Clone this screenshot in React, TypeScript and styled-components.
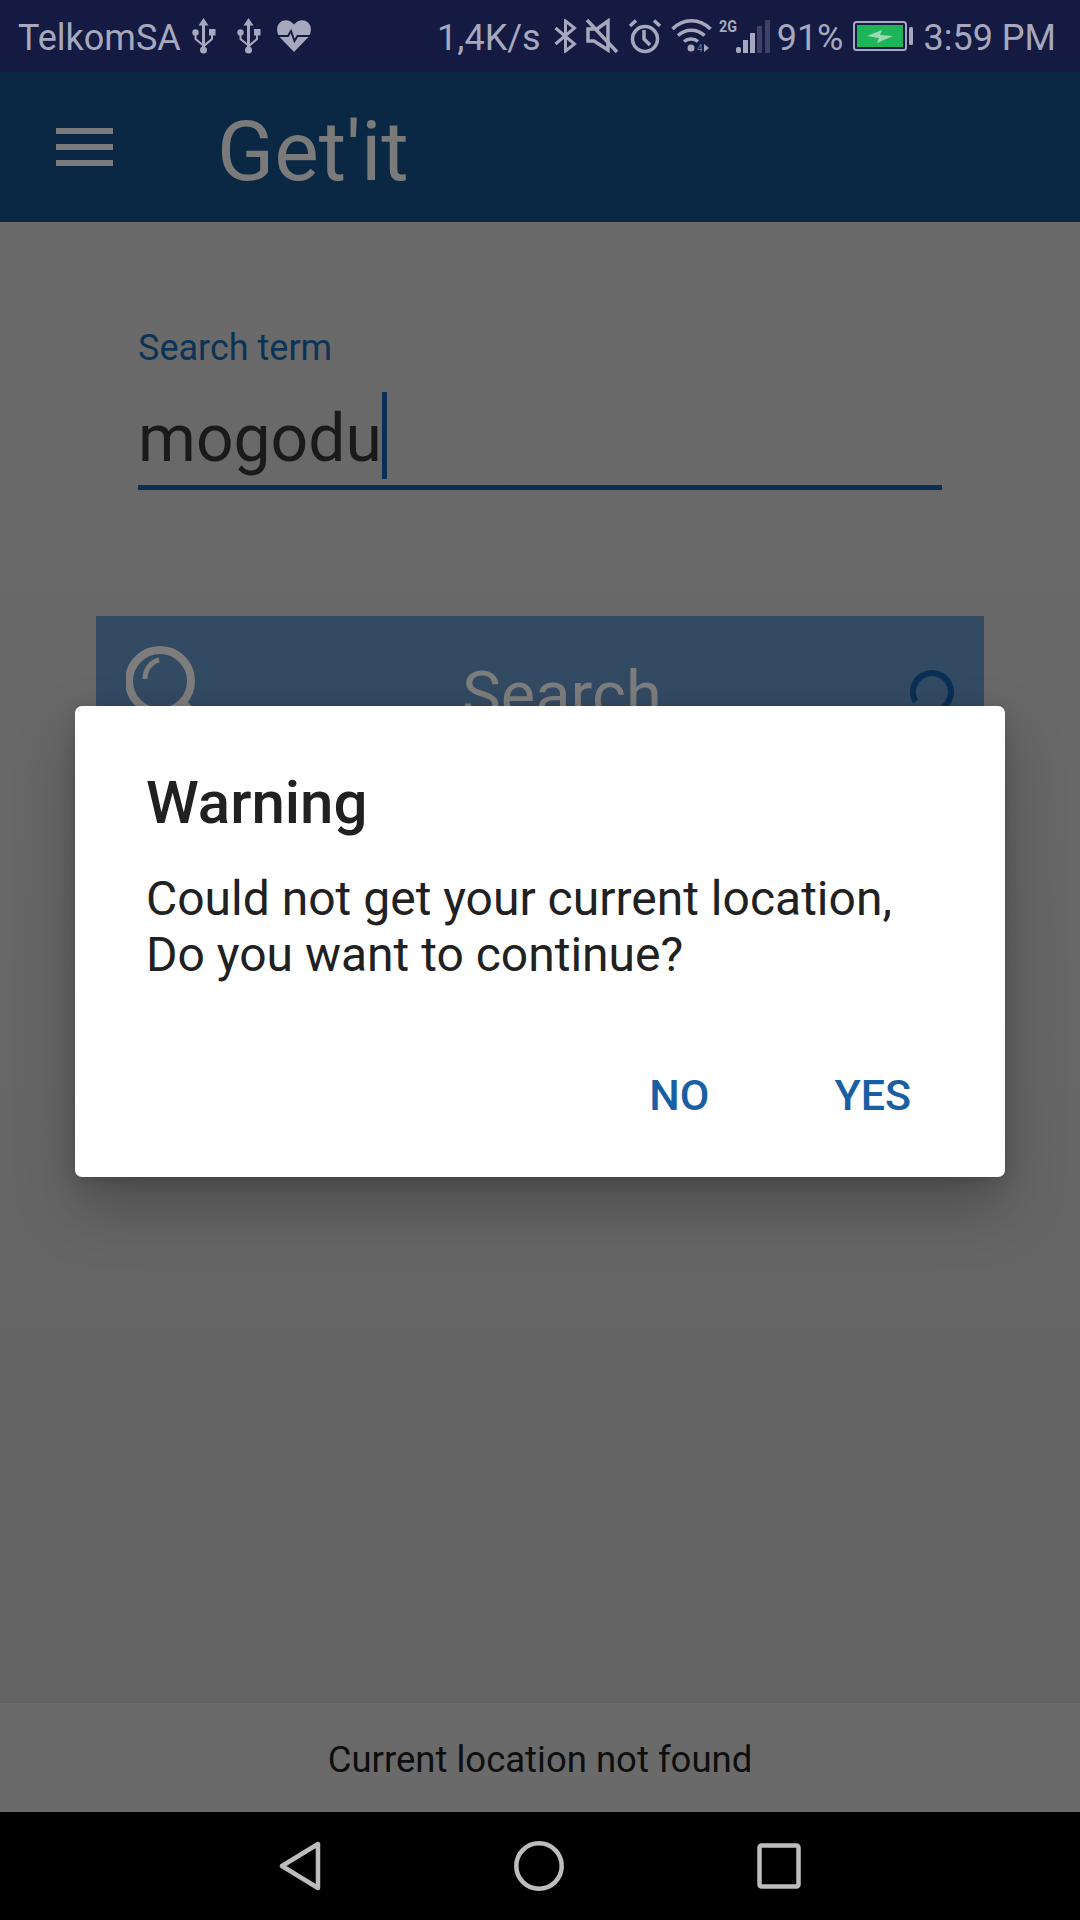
import styled, { createGlobalStyle } from "styled-components";

const GlobalStyle = createGlobalStyle`
  html, body {
    margin: 0;
    padding: 0;
    background: #666;
  }
  * {
    box-sizing: border-box;
  }
`;

const Screen = styled.div`
  position: relative;
  width: 1080px;
  height: 1920px;
  display: flex;
  flex-direction: column;
  overflow: hidden;
  font-family: Roboto, "Liberation Sans", sans-serif;
`;

const StatusBar = styled.div`
  height: 72px;
  flex: none;
  padding: 0 24px 0 18px;
  display: flex;
  align-items: center;
  justify-content: space-between;
  background: #151a43;
  color: #a6a9bd;
  font-size: 36px;
`;

const StatusGroup = styled.div`
  display: flex;
  align-items: center;
`;

const StatusIcon = styled.svg<{ $left?: number }>`
  flex: none;
  margin-left: ${(p) => p.$left ?? 0}px;
`;

const StatusText = styled.span<{ $left?: number }>`
  margin-left: ${(p) => p.$left ?? 0}px;
  padding-top: 3px;
  white-space: nowrap;
`;

const AppBar = styled.div`
  height: 150px;
  flex: none;
  padding-left: 56px;
  display: flex;
  align-items: center;
  background: #0a2744;
`;

const MenuIcon = styled.div`
  width: 57px;
  height: 38px;
  border-top: 6px solid #7a7a7a;
  border-bottom: 6px solid #7a7a7a;
  display: flex;
  align-items: center;
  &::before {
    content: "";
    width: 100%;
    height: 6px;
    background: #7a7a7a;
  }
`;

const AppTitle = styled.div`
  margin: 10px 0 0 104px;
  color: #7a7a7a;
  font-size: 84px;
  line-height: 1;
`;

const Content = styled.div`
  flex: 1;
  padding: 104px 96px 0;
  background: linear-gradient(#6a6a6a, #646464);
`;

const Form = styled.div`
  padding: 0 42px;
`;

const FieldLabel = styled.div`
  color: #0c3355;
  font-size: 36px;
  line-height: 44px;
`;

const FieldInput = styled.div`
  height: 114px;
  margin-top: 6px;
  padding-top: 27px;
  display: flex;
  align-items: flex-start;
  border-bottom: 5px solid #0a2f54;
  color: #1a1a1a;
  font-size: 66px;
  line-height: 72px;
`;

const Caret = styled.span`
  width: 5px;
  height: 87px;
  margin-top: -11px;
  background: #0a2f54;
`;

const SearchButton = styled.div`
  height: 150px;
  margin-top: 126px;
  padding: 27px 30px 0;
  display: flex;
  align-items: flex-start;
  justify-content: space-between;
  background: #334a63;
`;

const SearchLabel = styled.div`
  margin: 15px 0 0 16px;
  color: #7d7d7d;
  font-size: 65px;
  line-height: 75px;
`;

const SpinnerIcon = styled.svg`
  margin-top: 27px;
`;

const Snackbar = styled.div`
  height: 110px;
  flex: none;
  padding-top: 3px;
  display: flex;
  align-items: center;
  justify-content: center;
  background: #6a6a6a;
  border-top: 1px solid #626262;
  color: #0e0e0e;
  font-size: 36.5px;
`;

const NavBar = styled.div`
  height: 108px;
  flex: none;
  display: flex;
  align-items: center;
  justify-content: center;
  gap: 193px;
  background: #000;
`;

const Dialog = styled.div`
  position: absolute;
  left: 75px;
  top: 706px;
  width: 930px;
  height: 471px;
  padding: 62px 73px 0 71px;
  background: #fff;
  border-radius: 7px;
  box-shadow: 0 30px 60px rgba(0, 0, 0, 0.25), 0 4px 16px rgba(0, 0, 0, 0.15);
`;

const DialogTitle = styled.div`
  color: #212121;
  font-size: 60px;
  font-weight: 500;
  line-height: 70px;
`;

const DialogBody = styled.div`
  margin-top: 33px;
  color: #212121;
  font-size: 48px;
  line-height: 56px;
`;

const DialogActions = styled.div`
  margin-top: 88px;
  padding-right: 21px;
  display: flex;
  justify-content: flex-end;
  gap: 125px;
`;

const DialogAction = styled.div`
  color: #1a5fa3;
  font-size: 43px;
  font-weight: 500;
  line-height: 48px;
`;

const ICON = "#a6a9bd";

const UsbIcon = ({ left }: { left?: number }) => (
  <StatusIcon $left={left} width="24" height="36" viewBox="0 0 24 36" fill={ICON}>
    <path d="M11.500 0l5 7.500h-3.500V30h-3V7.500H6.500z" />
    <circle cx="11.500" cy="32" r="3.500" />
    <circle cx="3.500" cy="14.500" r="3.200" />
    <rect x="17" y="11" width="6.500" height="6.500" />
    <path d="M2.500 16h2v4.500l6 5v2.500l-8-6.500zM19 16h2v5.500l-8 7v-3l6-5z" />
  </StatusIcon>
);

const HealthIcon = () => (
  <StatusIcon $left={16} width="34" height="32" viewBox="0 0 34 32">
    <path
      fill={ICON}
      d="M17 32L2.500 17C-1 12-.5 5.500 3 2.500 7-1 13-.5 17 4.500 21-.5 27-1 31 2.500 34.500 5.500 35 12 31.500 17z"
    />
    <path fill="none" stroke="#151a43" strokeWidth="2" d="M0 16h11l3-5 3.500 10 3-5h14" />
  </StatusIcon>
);

const BluetoothIcon = () => (
  <StatusIcon $left={13} width="23" height="34" viewBox="0 0 23 34" fill="none" stroke={ICON} strokeWidth="3">
    <path d="M1.500 9l19 16-9 7V2l9 7-19 16" />
  </StatusIcon>
);

const MuteIcon = () => (
  <StatusIcon $left={8} width="34" height="36" viewBox="0 0 34 36" fill="none" stroke={ICON} strokeWidth="3.500">
    <path d="M3 13v10h6l14 9V3L12 11H3z" />
    <path d="M2 2l30 32" />
  </StatusIcon>
);

const AlarmIcon = () => (
  <StatusIcon $left={9} width="34" height="36" viewBox="0 0 34 36" fill="none" stroke={ICON} strokeWidth="3.500">
    <circle cx="17" cy="21" r="12.500" />
    <path d="M16 12v9l6 6M2 8l6-5.500M32 8l-6-5.500" />
  </StatusIcon>
);

const WifiIcon = () => (
  <StatusIcon $left={9} width="41" height="34" viewBox="0 0 41 34" fill="none" stroke={ICON} strokeWidth="3.500">
    <path d="M1.500 10c11-11 27-11 38 0M7 16.500c7.500-7 19-7 26.500 0M13 22.500c4-3.500 10-3.500 14 0" />
    <circle cx="20" cy="29" r="3.500" fill={ICON} stroke="none" />
    <text x="26" y="33" fill="#6d7190" stroke="none" fontFamily="Roboto" fontSize="10">4</text>
    <path d="M33 25v8l5-4z" fill={ICON} stroke="none" />
  </StatusIcon>
);

const SignalIcon = () => (
  <StatusIcon $left={7} width="52" height="44" viewBox="0 -4 52 44">
    <text x="0" y="14" fill={ICON} fontFamily="Roboto" fontSize="17" fontWeight="700" textLength="18" lengthAdjust="spacingAndGlyphs">2G</text>
    <rect x="17" y="29" width="5" height="6" rx="2" fill={ICON} />
    <rect x="24" y="22" width="5" height="13" fill={ICON} />
    <rect x="31" y="15" width="5" height="20" fill={ICON} />
    <rect x="38" y="8" width="5" height="27" fill="#3d4266" />
    <rect x="46" y="2" width="5" height="33" fill="#3d4266" />
  </StatusIcon>
);

const BatteryIcon = () => (
  <StatusIcon $left={9} width="60" height="30" viewBox="0 0 60 30">
    <rect x="1" y="1" width="52" height="28" rx="2.500" fill="none" stroke={ICON} strokeWidth="2" />
    <rect x="4" y="4" width="46" height="22" fill="#1eb45a" />
    <path d="M14 15l15-6-2 5 13 1-16 7 2-5z" fill="#9ed9b2" />
    <rect x="56" y="6" width="4" height="18" rx="1.500" fill={ICON} />
  </StatusIcon>
);

const SearchIcon = () => (
  <svg width="72" height="90" viewBox="0 0 72 90" fill="none" stroke="#7d7d7d">
    <circle cx="34" cy="38" r="31" strokeWidth="8" />
    <path d="M19 36c0-10 6-17 14-19" strokeWidth="5" />
    <path d="M58 62l14 16" strokeWidth="10" />
  </svg>
);

const Spinner = () => (
  <SpinnerIcon width="44" height="44" viewBox="0 0 44 44" fill="none" stroke="#0a2f54" strokeWidth="6">
    <path d="M5.500 31.500A19 19 0 1 1 33 37.500" />
  </SpinnerIcon>
);

const BackIcon = () => (
  <svg width="42" height="50" viewBox="0 0 42 50" fill="none" stroke="#bdbdbd" strokeWidth="4.500" strokeLinejoin="round">
    <path d="M39 3v44L3 25z" />
  </svg>
);

const HomeIcon = () => (
  <svg width="50" height="50" viewBox="0 0 50 50" fill="none" stroke="#bdbdbd" strokeWidth="4.500">
    <circle cx="25" cy="25" r="22.700" />
  </svg>
);

const RecentsIcon = () => (
  <svg width="44" height="46" viewBox="0 0 44 46" fill="none" stroke="#bdbdbd" strokeWidth="4.500" strokeLinejoin="round">
    <rect x="2.500" y="2.500" width="39" height="41" rx="2" />
  </svg>
);

export default function App() {
  return (
    <Screen>
      <GlobalStyle />
      <StatusBar>
        <StatusGroup>
          <StatusText>TelkomSA</StatusText>
          <UsbIcon left={11} />
          <UsbIcon left={21} />
          <HealthIcon />
        </StatusGroup>
        <StatusGroup>
          <StatusText>1,4K/s</StatusText>
          <BluetoothIcon />
          <MuteIcon />
          <AlarmIcon />
          <WifiIcon />
          <SignalIcon />
          <StatusText $left={6}>91%</StatusText>
          <BatteryIcon />
          <StatusText $left={11}>3:59 PM</StatusText>
        </StatusGroup>
      </StatusBar>
      <AppBar>
        <MenuIcon />
        <AppTitle>Get'it</AppTitle>
      </AppBar>
      <Content>
        <Form>
          <FieldLabel>Search term</FieldLabel>
          <FieldInput>
            mogodu
            <Caret />
          </FieldInput>
        </Form>
        <SearchButton>
          <SearchIcon />
          <SearchLabel>Search</SearchLabel>
          <Spinner />
        </SearchButton>
      </Content>
      <Snackbar>Current location not found</Snackbar>
      <NavBar>
        <BackIcon />
        <HomeIcon />
        <RecentsIcon />
      </NavBar>
      <Dialog>
        <DialogTitle>Warning</DialogTitle>
        <DialogBody>
          Could not get your current location,
          <br />
          Do you want to continue?
        </DialogBody>
        <DialogActions>
          <DialogAction>NO</DialogAction>
          <DialogAction>YES</DialogAction>
        </DialogActions>
      </Dialog>
    </Screen>
  );
}
